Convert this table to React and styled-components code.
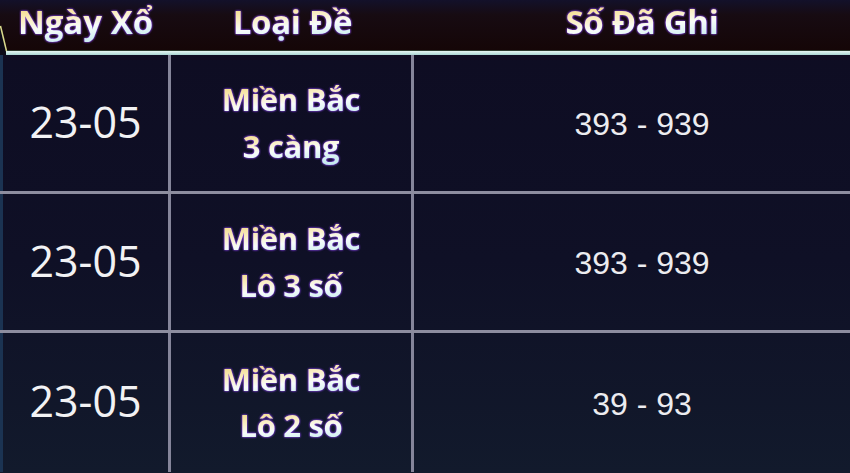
import React from 'react';
import styled, { createGlobalStyle } from 'styled-components';

const Global = createGlobalStyle`
  html, body { margin: 0; padding: 0; background: #0e0d22; overflow: hidden; }
  body { width: 850px; height: 473px; }
  * { box-sizing: border-box; }
`;

const Frame = styled.div`
  position: relative;
  width: 850px;
  height: 473px;
  overflow: hidden;
  background: linear-gradient(180deg, #0e0c22 0%, #0f1026 55%, #121a2c 100%);
`;

const Table = styled.div`
  width: 870px;
  display: flex;
  flex-direction: column;
`;

const Header = styled.div`
  display: grid;
  grid-template-columns: 171px 243px 1fr;
  align-items: center;
  height: 50px;
  background: linear-gradient(180deg, #13112a 0%, #170b12 30%, #150607 100%);
`;

const HeaderRule = styled.div`
  height: 5px;
  margin-left: 6px;
  background: linear-gradient(180deg, #2c3a2e 0, #2c3a2e 1px, #e6f7f3 1px, #c8e8e4 3px, #a9d3d2 5px);
`;

const HeadCell = styled.div`
  display: flex;
  justify-content: center;
  align-items: center;
  padding-bottom: 6px;
`;

const Glow = styled.span`
  display: inline-block;
  font-family: "Open Sans", "Noto Sans", sans-serif;
  font-weight: 700;
  font-size: ${p => p.$size}px;
  line-height: 1.2;
  letter-spacing: ${p => p.$ls || 0}px;
  white-space: nowrap;
  background: linear-gradient(175deg, #eed06a 0%, #faefc6 38%, #f7fcfa 58%, #d6f1f2 80%, #bfe6ee 100%);
  -webkit-background-clip: text;
  background-clip: text;
  color: transparent;
  filter: drop-shadow(0 0 1px #7b3fd4) drop-shadow(0 0 0.6px #6a34c0);
`;

const Row = styled.div`
  display: grid;
  grid-template-columns: 171px 243px 1fr;
  height: 139px;
  border-bottom: 3px solid #8d8d9f;
  &:last-child { border-bottom: none; }
`;

const Cell = styled.div`
  display: flex;
  flex-direction: column;
  justify-content: center;
  align-items: center;
  border-right: ${p => (p.$last ? 'none' : '3px solid #85859a')};
  border-left: ${p => (p.$first ? '3px solid #1b3352' : 'none')};
`;

const DateText = styled.span`
  font-family: "Open Sans", "Noto Sans", sans-serif;
  font-weight: 400;
  font-size: 43px;
  color: #f2f2f4;
  margin-top: -4px;
`;

const TypeLines = styled.div`
  display: flex;
  flex-direction: column;
  align-items: center;
  gap: 9px;
`;

const NumText = styled.span`
  font-family: "Liberation Sans", Arial, sans-serif;
  font-size: 32px;
  color: #ececf0;
  margin-top: 3px;
`;

const Slant = styled.svg`
  position: absolute;
  left: 0;
  top: 0;
`;

const rows = [
  { date: '23-05', type: ['Miền Bắc', '3 càng'], nums: '393 - 939' },
  { date: '23-05', type: ['Miền Bắc', 'Lô 3 số'], nums: '393 - 939' },
  { date: '23-05', type: ['Miền Bắc', 'Lô 2 số'], nums: '39 - 93' },
];

export default function App() {
  return (
    <>
      <Global />
      <Frame>
        <Table>
          <Header>
            <HeadCell><Glow $size={33} $ls={0}>Ngày Xổ</Glow></HeadCell>
            <HeadCell><Glow $size={33} $ls={-0.3}>Loại Đề</Glow></HeadCell>
            <HeadCell><Glow $size={33} $ls={-0.3}>Số Đã Ghi</Glow></HeadCell>
          </Header>
          <HeaderRule />
          {rows.map((r, i) => (
            <Row key={i}>
              <Cell $first><DateText>{r.date}</DateText></Cell>
              <Cell>
                <TypeLines>
                  {r.type.map((t, j) => (
                    <Glow key={j} $size={31} $ls={-0.3}>{t}</Glow>
                  ))}
                </TypeLines>
              </Cell>
              <Cell $last><NumText>{r.nums}</NumText></Cell>
            </Row>
          ))}
        </Table>
        <Slant width="12" height="56" viewBox="0 0 12 56">
          <polygon points="0,26 6,50 6,55 0,55" fill="#0c0b18" />
          <line x1="0.5" y1="26" x2="6.5" y2="51" stroke="#d9d98c" strokeWidth="1.5" />
        </Slant>
      </Frame>
    </>
  );
}
